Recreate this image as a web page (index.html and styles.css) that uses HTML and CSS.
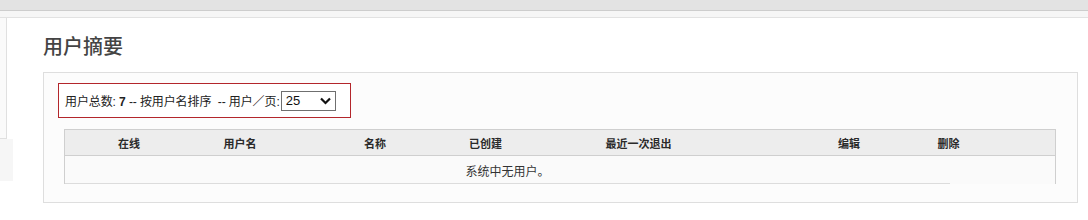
FILE: index.html
```
<!DOCTYPE html>
<html lang="zh-CN">

<head>
    <meta charset="UTF-8">
    <title>用户摘要</title>
    <link rel="stylesheet" href="styles.css">
</head>

<body>
    <div class="top_bar"></div>
    <div class="top_strip"></div>
    <div class="page">
        <div class="side">
            <div class="side_panel"></div>
            <div class="side_foot"></div>
        </div>
        <div class="main">
            <h1 class="main_title">用户摘要</h1>
            <div class="summary_box">
                <div class="filter_bar">
                    <span>用户总数: <b class="num">7</b> -- 按用户名排序 &nbsp;-- 用户／页:</span>
                    <span class="select_wrap">
                        <select class="per_page">
                            <option>25</option>
                            <option>50</option>
                            <option>100</option>
                        </select>
                        <svg class="select_arrow" width="11" height="8" viewBox="0 0 11 8">
                            <path d="M1 1.5 L5.5 6 L10 1.5" fill="none" stroke="#111" stroke-width="2.2" />
                        </svg>
                    </span>
                </div>
                <table class="user_table">
                    <colgroup>
                        <col style="width:128px">
                        <col style="width:94px">
                        <col style="width:176px">
                        <col style="width:45px">
                        <col style="width:261px">
                        <col style="width:160px">
                        <col style="width:39px">
                        <col>
                    </colgroup>
                    <thead>
                        <tr>
                            <th>在线</th>
                            <th>用户名</th>
                            <th>名称</th>
                            <th>已创建</th>
                            <th>最近一次退出</th>
                            <th>编辑</th>
                            <th>删除</th>
                            <th></th>
                        </tr>
                    </thead>
                    <tbody>
                        <tr>
                            <td colspan="8">
                                <div class="empty_row">系统中无用户。</div>
                            </td>
                        </tr>
                    </tbody>
                </table>
            </div>
        </div>
    </div>
</body>

</html>
```

FILE: styles.css
```
body {
    margin: 0;
    background: #fff;
    font-family: "Liberation Sans", "Noto Sans CJK SC", sans-serif;
    font-size: 12px;
    color: #333;
}

.top_bar {
    height: 10px;
    background-color: #e3e3e3;
    border-bottom: 1px solid #cdcdcd;
}

.top_strip {
    height: 6px;
    background-color: #f6f6f6;
    border-bottom: 1px solid #e2e2e2;
}

.page {
    display: flex;
}

.side {
    width: 13px;
    flex-shrink: 0;
}

.side_panel {
    width: 6px;
    height: 120px;
    background-color: #fafafa;
    border-right: 1px solid #e0e0e0;
    border-bottom: 1px solid #e0e0e0;
}

.side_foot {
    height: 42px;
    background-color: #f6f6f6;
}

.main {
    flex: 1;
    padding: 16px 10px 0 30px;
}

.main_title {
    margin: 0 0 14px;
    height: 24px;
    line-height: 24px;
    font-family: "Noto Sans CJK SC", sans-serif;
    font-size: 20px;
    font-weight: 500;
    color: #444;
}

.summary_box {
    border: 1px solid #dedede;
    background-color: #fcfcfc;
    padding: 10px 20px 18px;
}

.filter_bar {
    display: inline-flex;
    align-items: center;
    height: 33px;
    width: 285px;
    padding: 0 0 0 6px;
    margin-left: -6px;
    border: 1px solid #b3262b;
    background-color: #fff;
    font-family: "Liberation Sans", "Noto Sans CJK SC", sans-serif;
    font-size: 12px;
    letter-spacing: -0.1px;
    color: #222;
}

.num {
    font-weight: bold;
}

.select_wrap {
    position: relative;
    display: inline-block;
    margin-left: 1px;
    height: 20px;
}

.per_page {
    -webkit-appearance: none;
    appearance: none;
    width: 55px;
    height: 20px;
    padding: 0 0 0 4px;
    border: 1px solid #6f6f6f;
    border-radius: 0;
    background: #fff;
    font-family: "Liberation Sans", sans-serif;
    font-size: 13px;
    color: #111;
    outline: none;
}

.select_arrow {
    position: absolute;
    right: 5px;
    top: 6px;
    pointer-events: none;
}

.user_table {
    width: 992px;
    margin-top: 11px;
    table-layout: fixed;
    border-collapse: separate;
    border-spacing: 0;
    border-top: 1px solid #cfcfcf;
    border-left: 1px solid #cfcfcf;
    border-right: 1px solid #cfcfcf;
}

.user_table th {
    height: 25px;
    padding: 0;
    background-color: #ededed;
    border-bottom: 1px solid #cfcfcf;
    font-family: "Liberation Sans", "Noto Sans CJK SC", sans-serif;
    font-size: 11px;
    font-weight: bold;
    color: #2a2a2a;
    text-align: center;
}

.user_table td {
    padding: 0;
    background-color: #fafafa;
}

.empty_row {
    width: 885px;
    height: 24px;
    padding-top: 3px;
    line-height: 24px;
    text-align: center;
    border-bottom: 1px solid #dcdcdc;
    font-family: "Noto Sans CJK SC", sans-serif;
    font-size: 12px;
    color: #333;
}
```
